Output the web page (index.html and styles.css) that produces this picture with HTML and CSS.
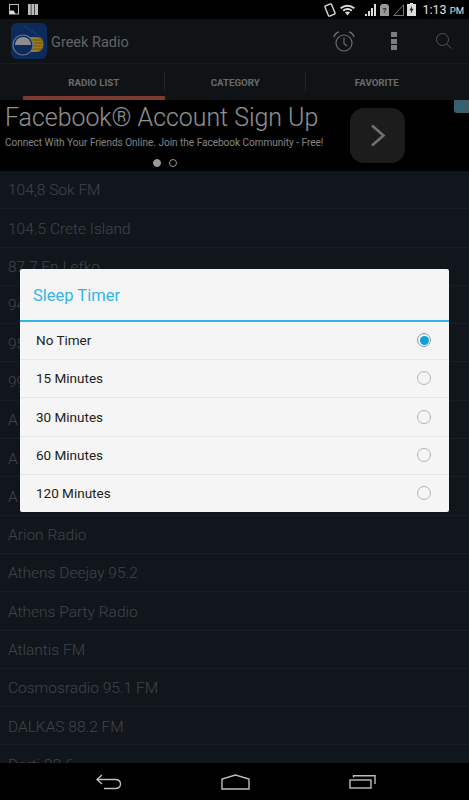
FILE: index.html
```html
<!DOCTYPE html>
<html lang="en">
<head>
    <meta charset="UTF-8">
    <meta name="viewport" content="width=device-width, initial-scale=1.0">
    <title>Greek Radio</title>
    <link rel="stylesheet" href="styles.css">
</head>
<body>
    <div class="status-bar">
        <div class="status-left">
            <svg width="10" height="11" viewBox="0 0 10 11"><rect x="0.5" y="0.5" width="9" height="9.500" fill="none" stroke="#bbb"/><path d="M1 6.500h3.500l2 3.500H1z" fill="#ddd"/></svg>
            <svg width="10" height="11" viewBox="0 0 10 11"><path d="M0 0h2.800v11H0zM3.400 0h2.800v11H3.400zM6.800 0h3.200v11H6.800z" fill="#bbb"/></svg>
        </div>
        <div class="status-right">
            <svg width="12" height="14" viewBox="0 0 12 14"><rect x="2.500" y="1.500" width="7" height="11" rx="1" transform="rotate(-22 6 7)" fill="none" stroke="#ddd" stroke-width="1.400"/></svg>
            <svg class="wifi" width="15" height="12" viewBox="0 0 15 12"><path d="M0 3.500Q7.500-2 15 3.500l-1.300 1.500Q7.500 0.500 1.300 5z" fill="#ddd"/><path d="M2.500 6Q7.500 2 12.500 6l-1.300 1.400Q7.500 4.500 3.800 7.400z" fill="#ddd"/><path d="M5 8.300Q7.500 6.500 10 8.300L7.500 11.500z" fill="#ddd"/></svg>
            <svg width="12" height="12" viewBox="0 0 12 12"><path d="M1 12h2V10H1zM4 12h2V7H4zM7 12h2V4H7zM10 12h2V0h-2z" fill="#ddd"/></svg>
            <svg width="9" height="12" viewBox="0 0 9 12"><path d="M2 0h5l2 2v10H0V2z" fill="#999"/><text x="2.500" y="9" class="sim-mark">?</text></svg>
            <svg width="11" height="12" viewBox="0 0 11 12"><path d="M0.800 11.500 10.500 0.800v10.700z" fill="none" stroke="#777"/></svg>
            <svg class="battery" width="9" height="13" viewBox="0 0 9 13"><path d="M3 0h3v1h3v12H0V1h3z" fill="#ddd"/><path d="M5 2.500 2.500 7.500H4.300L3.700 11 6.500 5.800H4.700z" fill="#222"/></svg>
            <span class="clock">1:13 <small>PM</small></span>
        </div>
    </div>

    <div class="screen">
        <div class="action-bar">
            <svg class="logo" width="36" height="36" viewBox="0 0 36 36">
                <rect width="36" height="36" rx="6" fill="#14489a"/>
                <path d="M12 2 31 15" stroke="#4d79b0" stroke-width="0.700"/>
                <path d="M17 14H25Q33 14 32.500 21.500 32 29 25 29H17z" fill="#ffcc32"/>
                <path d="M22 17h10M23 20h10M23 23h10M22 26h9" stroke="#a57c15" stroke-width="0.800"/>
                <circle cx="12" cy="22" r="10" fill="#14489a" stroke="#a9c0dc" stroke-width="1.200"/>
                <path d="M4 22a8 8 0 0 1 16 0z" fill="#ececec"/>
            </svg>
            <span class="app-title">Greek Radio</span>
            <div class="actions">
                <svg class="alarm" width="22" height="21" viewBox="0 0 22 21" fill="none" stroke="#b0b0b0" stroke-width="1.200"><circle cx="11" cy="12" r="8"/><path d="M11 6.500v6l3 2.500"/><path d="M1 6Q2 2 6 1M21 6Q20 2 16 1" stroke-width="1.600"/></svg>
                <div class="overflow-dots"><i></i><i></i><i></i></div>
                <svg width="16" height="16" viewBox="0 0 16 16" fill="none" stroke="#8a8a8a" stroke-width="1"><circle cx="6.500" cy="6.500" r="6"/><path d="M10.800 11 15.500 15.500"/></svg>
            </div>
        </div>

        <div class="tabs">
            <div class="tab active">RADIO LIST</div>
            <div class="tab">CATEGORY</div>
            <div class="tab">FAVORITE</div>
        </div>

        <div class="ad">
            <div class="ad-text">
                <div class="ad-title">Facebook® Account Sign Up</div>
                <div class="ad-sub">Connect With Your Friends Online. Join the Facebook Community - Free!</div>
                <div class="ad-dots"><i class="on"></i><i></i></div>
            </div>
            <div class="ad-button">
                <svg width="16" height="23" viewBox="0 0 16 23" fill="none" stroke="#bbb" stroke-width="2.600"><path d="M2 1.500 13.500 11.500 2 21.500"/></svg>
            </div>
            <div class="ad-badge">
                <svg width="9" height="10" viewBox="0 0 9 10" fill="none" stroke="#35b6e0" stroke-width="1.200"><path d="M1 1 8 5 1 9z"/></svg>
            </div>
        </div>

        <ul class="station-list">
            <li>104,8 Sok FM</li>
            <li>104.5 Crete Island</li>
            <li>87.7 En Lefko</li>
            <li>94</li>
            <li>95</li>
            <li>99</li>
            <li>A</li>
            <li>A</li>
            <li>A</li>
            <li>Arion Radio</li>
            <li>Athens Deejay 95.2</li>
            <li>Athens Party Radio</li>
            <li>Atlantis FM</li>
            <li>Cosmosradio 95.1 FM</li>
            <li>DALKAS 88.2 FM</li>
            <li>Derti 98.6</li>
        </ul>

        <div class="overlay">
            <div class="dialog">
                <div class="dialog-title">Sleep Timer</div>
                <div class="option">No Timer<span class="radio checked"></span></div>
                <div class="option">15 Minutes<span class="radio"></span></div>
                <div class="option">30 Minutes<span class="radio"></span></div>
                <div class="option">60 Minutes<span class="radio"></span></div>
                <div class="option">120 Minutes<span class="radio"></span></div>
            </div>
        </div>
    </div>

    <div class="nav-bar">
        <svg width="27" height="16" viewBox="0 0 27 16" fill="none" stroke="#bdbdbd" stroke-width="1.400"><path d="M7 1 2 5.500 7 10"/><path d="M2 5.500H20Q25.500 5.500 25.500 10T20 14.500H9"/></svg>
        <svg width="29" height="16" viewBox="0 0 29 16" fill="none" stroke="#bdbdbd" stroke-width="1.400"><path d="M1 15V5L14.500 1 28 5v10z"/></svg>
        <svg width="27" height="15" viewBox="0 0 27 15" fill="none" stroke="#bdbdbd" stroke-width="1.400"><rect x="1" y="6" width="21" height="8"/><path d="M4.500 3.500V1.800H26V10"/></svg>
    </div>
</body>
</html>
```

FILE: styles.css
```css
* {
    box-sizing: border-box;
}

html, body {
    margin: 0;
    padding: 0;
}

body {
    width: 469px;
    height: 800px;
    overflow: hidden;
    display: flex;
    flex-direction: column;
    font-family: Roboto, "Liberation Sans", sans-serif;
    background-color: #000;
}

.status-bar {
    height: 19px;
    flex: none;
    display: flex;
    justify-content: space-between;
    align-items: center;
    padding: 0 5px 0 9px;
    background-color: #000;
}

.status-left, .status-right {
    display: flex;
    align-items: center;
}

.status-left {
    gap: 9px;
}

.status-right {
    gap: 4px;
}

.status-right .wifi {
    margin-right: 5px;
}

.status-right .battery {
    margin-left: -1px;
}

.sim-mark {
    font-size: 8px;
    font-weight: 700;
    fill: #222;
}

.clock {
    margin-left: 2px;
    font-size: 12.500px;
    white-space: nowrap;
    color: #e0e0e0;
}

.clock small {
    font-size: 9.500px;
}

.screen {
    position: relative;
    flex: 1;
    min-height: 0;
    display: flex;
    flex-direction: column;
    overflow: hidden;
    background-color: #1b2530;
}

.action-bar {
    height: 45px;
    flex: none;
    display: flex;
    align-items: center;
    padding-left: 11px;
    background-color: #1c2026;
    border-bottom: 1px solid #2b2e35;
}

.logo {
    flex: none;
}

.app-title {
    margin: 2px 0 0 4px;
    font-size: 14.500px;
    color: #a0a3a8;
}

.actions {
    margin-left: auto;
    display: flex;
    align-items: center;
    padding-right: 17px;
}

.alarm {
    margin-right: 36px;
}

.overflow-dots {
    display: flex;
    flex-direction: column;
    gap: 1.500px;
    margin-right: 39px;
}

.overflow-dots i {
    display: block;
    width: 6px;
    height: 5px;
    background-color: #d0d0d0;
}

.tabs {
    height: 36px;
    flex: none;
    display: flex;
    background-color: #1c2026;
    padding-left: 23px;
}

.tab {
    width: 141.500px;
    position: relative;
    display: flex;
    align-items: flex-start;
    justify-content: center;
    padding-top: 13px;
    font-size: 9.700px;
    font-weight: 700;
    color: #b0b0b0;
}

.tab::after {
    content: "";
    position: absolute;
    top: 8px;
    right: 0;
    height: 19px;
    width: 1px;
    background-color: #3c4148;
}

.tab:last-child::after {
    display: none;
}

.tab.active::before {
    content: "";
    position: absolute;
    left: 0;
    right: 0;
    bottom: 0;
    height: 4px;
    background-color: #cd6150;
}

.ad {
    position: relative;
    height: 71px;
    flex: none;
    display: flex;
    background-color: #000;
    overflow: hidden;
}

.ad-text {
    width: 340px;
    padding-left: 5px;
}

.ad-title {
    margin-top: 2px;
    font-size: 24.900px;
    font-weight: 300;
    line-height: 31px;
    white-space: nowrap;
    color: #eee;
}

.ad-sub {
    margin-top: 3px;
    font-size: 10px;
    line-height: 13px;
    white-space: nowrap;
    color: #ddd;
}

.ad-dots {
    margin-top: 10px;
    padding-left: 148px;
    display: flex;
    gap: 8px;
}

.ad-dots i {
    display: block;
    width: 8px;
    height: 8px;
    border-radius: 50%;
    border: 1px solid #fff;
}

.ad-dots i.on {
    background-color: #fff;
}

.ad-button {
    width: 55px;
    height: 55px;
    margin: 8px 0 0 10px;
    border-radius: 14px;
    display: flex;
    align-items: center;
    justify-content: center;
    background-color: #303030;
}

.ad-badge {
    position: absolute;
    top: 0;
    right: 0;
    width: 15px;
    height: 13px;
    display: flex;
    align-items: center;
    justify-content: center;
    border-bottom-left-radius: 3px;
    background-color: #6a9bb0;
}

.station-list {
    list-style: none;
    margin: 0;
    padding: 0;
}

.station-list li {
    height: 38.300px;
    padding: 1.600px 0 0 8px;
    display: flex;
    align-items: center;
    font-size: 15.500px;
    font-weight: 300;
    white-space: nowrap;
    color: #6c727b;
    border-bottom: 1px solid #263140;
}

.overlay {
    position: absolute;
    inset: 0;
    padding-bottom: 1px;
    display: flex;
    align-items: center;
    justify-content: center;
    background-color: rgba(0, 0, 0, 0.4);
}

.dialog {
    width: 429px;
    height: 243px;
    overflow: hidden;
    background-color: #f5f5f5;
    border-radius: 2px;
}

.dialog-title {
    height: 53px;
    padding: 1px 0 0 13px;
    display: flex;
    align-items: center;
    font-size: 16.500px;
    color: #33b5e5;
    border-bottom: 2px solid #33b5e5;
}

.option {
    height: 38.200px;
    display: flex;
    align-items: center;
    justify-content: space-between;
    padding: 0 18px 0.800px 16px;
    font-size: 13.500px;
    color: #222;
    border-bottom: 1px solid #e6e6e6;
}

.option:last-child {
    border-bottom: none;
}

.radio {
    width: 14px;
    height: 14px;
    border-radius: 50%;
    border: 1px solid #b4b4b4;
    display: flex;
    align-items: center;
    justify-content: center;
}

.radio.checked {
    border-color: #999;
}

.radio.checked::after {
    content: "";
    width: 9px;
    height: 9px;
    border-radius: 50%;
    background-color: #109fdc;
}

.nav-bar {
    height: 37px;
    flex: none;
    display: flex;
    align-items: center;
    padding-left: 95px;
    gap: 99px;
    background-color: #000;
}
```
